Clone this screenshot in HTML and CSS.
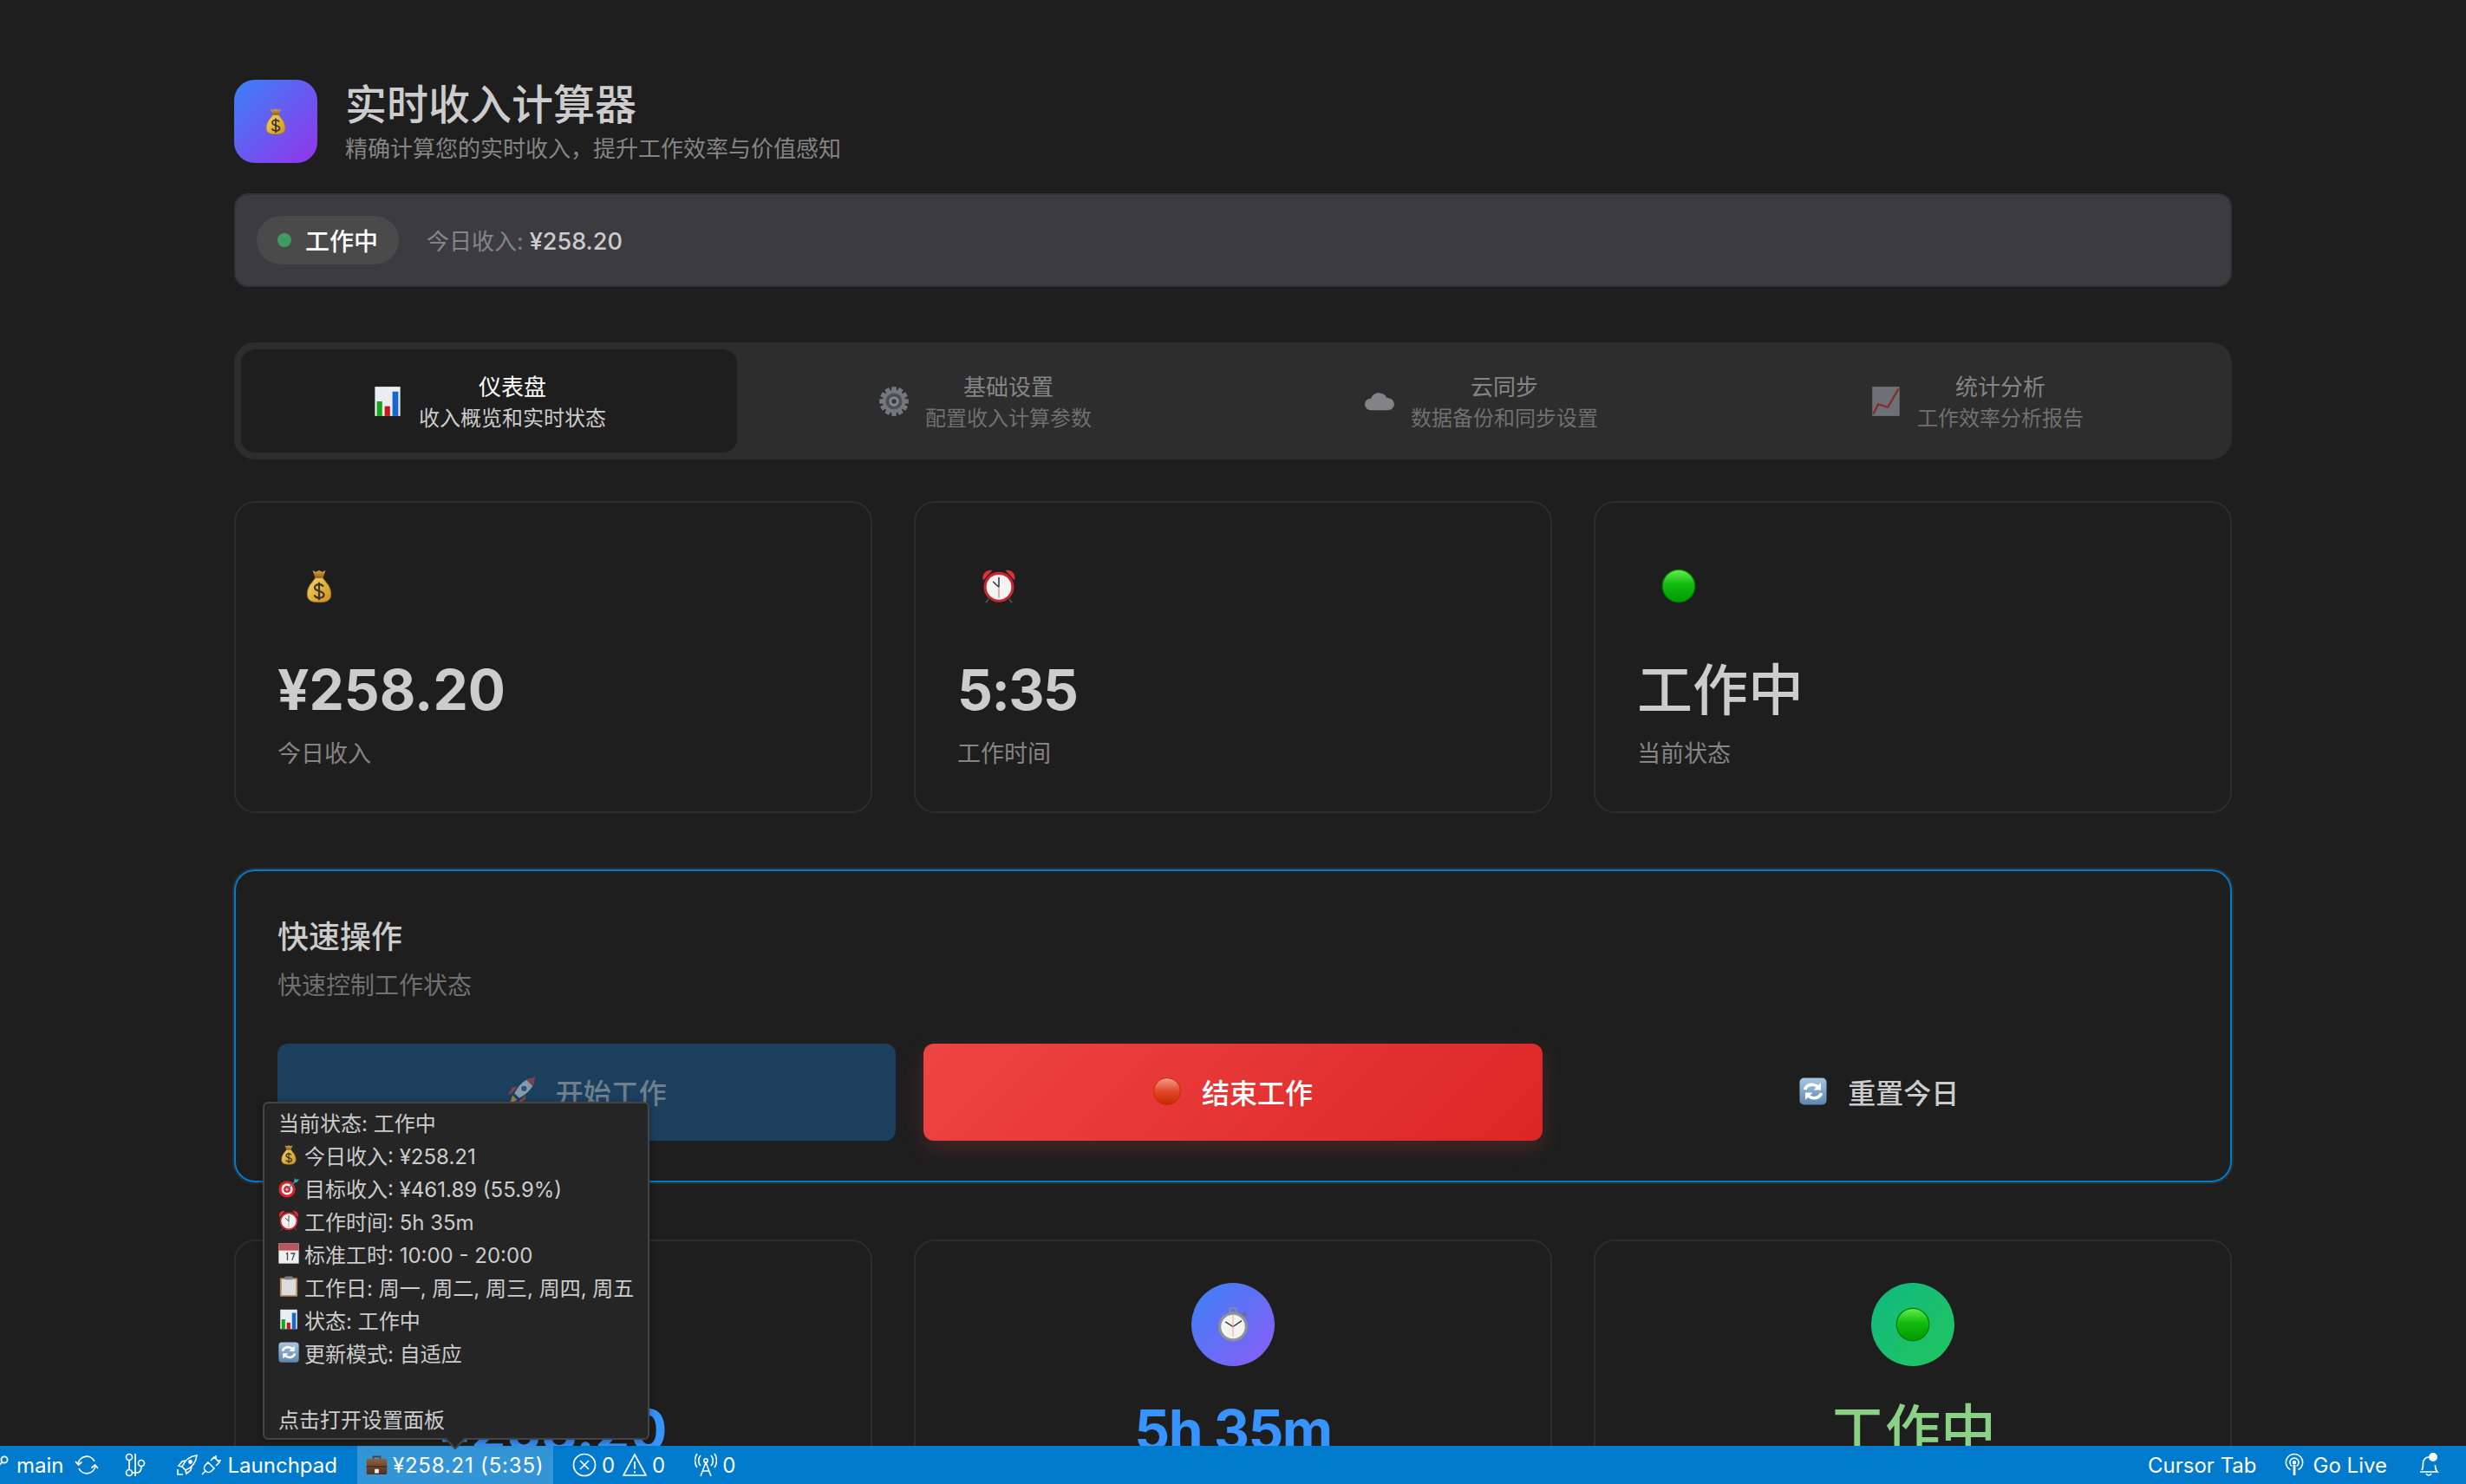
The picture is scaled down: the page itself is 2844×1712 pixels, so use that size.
FILE: index.html
```html
<!DOCTYPE html>
<html lang="zh-CN">
<head>
    <meta charset="utf-8">
    <title>实时收入计算器</title>
    <link rel="stylesheet" href="styles.css">
</head>
<body>
    <svg class="defs" width="0" height="0">
        <defs>
            <linearGradient id="g-bag" x1="0" y1="0" x2="1" y2="1"><stop offset="0" stop-color="#f6d765"/><stop offset="1" stop-color="#c98f22"/></linearGradient>
            <linearGradient id="g-neck" x1="0" y1="0" x2="0" y2="1"><stop offset="0" stop-color="#d9a648"/><stop offset="1" stop-color="#8a5a1c"/></linearGradient>
            <linearGradient id="g-green" x1="0" y1="0" x2="0" y2="1"><stop offset="0" stop-color="#62f04a"/><stop offset=".45" stop-color="#12bb10"/><stop offset="1" stop-color="#009a00"/></linearGradient>
            <linearGradient id="g-red" x1="0" y1="0" x2="0" y2="1"><stop offset="0" stop-color="#f3a08c"/><stop offset=".5" stop-color="#e0482a"/><stop offset="1" stop-color="#c92800"/></linearGradient>
            <linearGradient id="g-blue" x1="0" y1="0" x2="0" y2="1"><stop offset="0" stop-color="#a9c6e2"/><stop offset="1" stop-color="#5d86ae"/></linearGradient>
            <linearGradient id="g-case" x1="0" y1="0" x2="0" y2="1"><stop offset="0" stop-color="#8d5f3e"/><stop offset="1" stop-color="#4e3020"/></linearGradient>

            <symbol id="e-bag" viewBox="0 0 64 64">
                <path d="M20 3l6 3 6-3 6 3 6-3-5 15H25z" fill="url(#g-neck)"/>
                <path d="M25 17h14c2 5 15 14 15 30 0 11-7 15-22 15S10 58 10 47c0-16 13-25 15-30z" fill="url(#g-bag)" stroke="#a06f1c" stroke-width="1.5"/>
                <path d="M40 33c-2-3-5-4-8-4-4 0-8 2-8 6 0 8 17 5 17 13 0 4-4 6-9 6-4 0-7-2-9-5M32 25v33" fill="none" stroke="#3b3226" stroke-width="3.4"/>
            </symbol>
            <symbol id="e-chart" viewBox="0 0 64 64">
                <rect x="6" y="2" width="52" height="60" fill="#e8eef2"/>
                <rect x="10" y="32" width="11" height="30" fill="#17a51f"/>
                <rect x="26" y="42" width="11" height="20" fill="#c8171c"/>
                <rect x="42" y="12" width="12" height="50" fill="#1566cf"/>
            </symbol>
            <symbol id="e-gear" viewBox="0 0 64 64">
                <g fill="#868a90"><circle cx="32" cy="32" r="23"/>
                    <g id="teeth"><rect x="27" y="2" width="10" height="60" rx="2"/><rect x="27" y="2" width="10" height="60" rx="2" transform="rotate(30 32 32)"/><rect x="27" y="2" width="10" height="60" rx="2" transform="rotate(60 32 32)"/><rect x="27" y="2" width="10" height="60" rx="2" transform="rotate(90 32 32)"/><rect x="27" y="2" width="10" height="60" rx="2" transform="rotate(120 32 32)"/><rect x="27" y="2" width="10" height="60" rx="2" transform="rotate(150 32 32)"/></g>
                </g>
                <circle cx="32" cy="32" r="17" fill="#55595f"/>
                <circle cx="32" cy="32" r="10" fill="#9da1a6"/>
                <circle cx="32" cy="32" r="5" fill="#3b3e42"/>
            </symbol>
            <symbol id="e-cloud" viewBox="0 0 64 64">
                <path d="M15 50C7 50 2 44 2 38c0-7 6-12 12-11 3-8 10-13 18-12 7 0 12 4 15 10 9 0 15 6 15 13 0 7-6 12-14 12z" fill="#96999d"/>
            </symbol>
            <symbol id="e-trend" viewBox="0 0 64 64">
                <rect x="4" y="2" width="56" height="60" fill="#7e8388"/>
                <path d="M6 58l10-20 20 6L58 6" fill="none" stroke="#9c2a2e" stroke-width="4"/>
            </symbol>
            <symbol id="e-alarm" viewBox="0 0 64 64">
                <path d="M3 22C0 10 8 1 20 3zM61 22c3-12-5-21-17-19z" fill="#d8333d"/>
                <path d="M13 56l-5 7M51 56l5 7" stroke="#444" stroke-width="4"/>
                <circle cx="32" cy="34" r="28" fill="#c9272f"/>
                <circle cx="32" cy="34" r="23" fill="#f4f4f2"/>
                <path d="M32 34V16M32 34l-11-10" fill="none" stroke="#333" stroke-width="2.4"/>
                <path d="M32 34v20" stroke="#d8333d" stroke-width="1.2"/>
            </symbol>
            <symbol id="e-green" viewBox="0 0 64 64">
                <circle cx="32" cy="32" r="30" fill="url(#g-green)" stroke="#007d00" stroke-width="2"/>
            </symbol>
            <symbol id="e-red" viewBox="0 0 64 64">
                <circle cx="32" cy="32" r="31" fill="url(#g-red)" stroke="#c92800" stroke-width="2"/>
            </symbol>
            <symbol id="e-rocket" viewBox="3 3 58 58">
                <path d="M8 58l6-18 10 10z" fill="#e5a72b"/>
                <path d="M14 34L4 40l10-16 10-2zM30 50l-6 10 16-10 2-10z" fill="#d6453a"/>
                <path d="M60 4c-18 1-30 10-42 32l10 10c22-12 31-24 32-42z" fill="#c7d3de"/>
                <path d="M60 4c-6 0-12 2-17 4l13 13c2-5 4-11 4-17z" fill="#c7403c"/>
                <circle cx="38" cy="26" r="7" fill="#3c5e8e" stroke="#eef2f5" stroke-width="2"/>
            </symbol>
            <symbol id="e-refresh" viewBox="0 0 64 64">
                <rect x="1" y="1" width="62" height="62" rx="10" fill="url(#g-blue)"/>
                <path d="M13 28c3-10 15-15 26-9l6 4M51 36c-3 10-15 15-26 9l-6-4" fill="none" stroke="#fff" stroke-width="7"/>
                <path d="M50 12v17H33zM14 52V35h17z" fill="#fff"/>
            </symbol>
            <symbol id="e-watch" viewBox="0 0 64 64">
                <rect x="26" y="1" width="12" height="9" rx="4" fill="none" stroke="#8a8f96" stroke-width="3"/>
                <circle cx="53" cy="13" r="4" fill="#6b7078"/>
                <circle cx="32" cy="36" r="27" fill="#8f9398"/>
                <circle cx="32" cy="36" r="22" fill="#f3f3f1"/>
                <path d="M32 36L18 27M32 36l16-11" fill="none" stroke="#333" stroke-width="2.2"/>
                <path d="M32 14v40" stroke="#eba88c" stroke-width="1.6"/>
            </symbol>
            <symbol id="e-target" viewBox="1 2 62 62">
                <circle cx="27" cy="38" r="25" fill="#d8232e"/>
                <circle cx="27" cy="38" r="17" fill="#f4f1ee"/>
                <circle cx="27" cy="38" r="10" fill="#d8232e"/>
                <circle cx="27" cy="38" r="4" fill="#f4f1ee"/>
                <path d="M27 38L52 14" stroke="#4c7f8e" stroke-width="3.5"/>
                <path d="M48 14l2-10 4 5 9-1-6 9-7 2z" fill="#3fa6a8"/>
            </symbol>
            <symbol id="e-cal" viewBox="0 0 64 64">
                <rect x="1" y="1" width="62" height="62" fill="#eef0f2"/>
                <rect x="1" y="1" width="62" height="22" fill="#b9565c"/>
                <path d="M24 34l4-3v22M38 32h12l-8 21" fill="none" stroke="#44484d" stroke-width="3.5"/>
            </symbol>
            <symbol id="e-clip" viewBox="0 0 64 64">
                <rect x="5" y="6" width="54" height="57" rx="2" fill="#b9875a"/>
                <rect x="10" y="10" width="44" height="49" fill="#dcdcdc"/>
                <rect x="20" y="1" width="24" height="10" rx="2" fill="#7f8388"/>
            </symbol>
            <symbol id="e-case" viewBox="0 0 64 64">
                <path d="M22 14V6h20v8" fill="none" stroke="#5a3a26" stroke-width="4"/>
                <rect x="2" y="13" width="60" height="46" rx="4" fill="url(#g-case)"/>
                <rect x="2" y="34" width="60" height="3" fill="#3a2418"/>
                <rect x="26" y="43" width="12" height="12" fill="#eee"/>
            </symbol>

            <symbol id="i-branch" viewBox="0 0 24 24"><g fill="none" stroke="#fff" stroke-width="1.8"><circle cx="17" cy="6" r="3.6"/><path d="M14.5 9L6 17M3 21l5-5"/></g></symbol>
            <symbol id="i-sync" viewBox="0 0 28 28"><g fill="none" stroke="#fff" stroke-width="1.7"><path d="M4 13A10 10 0 0 1 23 10M24 15A10 10 0 0 1 5 18"/><path d="M1 10l3.500 4 4-3.500M27 18l-3.500-4-4 3.500"/></g></symbol>
            <symbol id="i-graph" viewBox="0 0 24 28"><g fill="none" stroke="#fff" stroke-width="1.7"><circle cx="5" cy="5" r="3.500"/><circle cx="5" cy="23" r="3.500"/><circle cx="19" cy="12" r="3.500"/><path d="M5 8.500v11M12 1v26M8.500 23H14c4 0 5-3 5-7.500"/></g></symbol>
            <symbol id="i-rocket" viewBox="0 0 24 24"><g fill="none" stroke="#fff" stroke-width="1.600"><path d="M23 1C14 2 9 7 6 14l4 4c7-3 12-8 13-17zM6 14l-4-1 4-5 4-1M10 18l1 4 5-4 1-4"/><circle cx="15.500" cy="8.500" r="1.600" fill="#fff"/><path d="M1 17v6h6"/></g></symbol>
            <symbol id="i-plug" viewBox="0 0 24 24"><g fill="none" stroke="#fff" stroke-width="1.600"><path d="M8 9l7 7-3 3c-2 2-5 2-7 0s-2-5 0-7zM1 23l4-4M11 7l4-4 6 6-4 4M17 1v5M23 7h-5"/></g></symbol>
            <symbol id="i-error" viewBox="0 0 28 28"><g fill="none" stroke="#fff" stroke-width="1.700"><circle cx="14" cy="14" r="12.500"/><path d="M9 9l10 10M19 9L9 19"/></g></symbol>
            <symbol id="i-warn" viewBox="0 0 28 28"><g fill="none" stroke="#fff" stroke-width="1.700"><path d="M14 2L27 26H1zM14 10v9M14 21v2.500"/></g></symbol>
            <symbol id="i-radio" viewBox="0 0 26 28"><g fill="none" stroke="#fff" stroke-width="1.600"><circle cx="13" cy="9" r="2.200"/><path d="M13 11L7 27M13 11l6 16M9 21h8M7 3a9 9 0 0 0 0 12M19 3a9 9 0 0 1 0 12M3 1a14 14 0 0 0 0 16M23 1a14 14 0 0 1 0 16"/></g></symbol>
            <symbol id="i-live" viewBox="0 0 24 28"><g fill="none" stroke="#fff" stroke-width="1.700"><path d="M7 20A10.500 10.500 0 1 1 17 20M9 15.500a5.500 5.500 0 1 1 6 0"/><circle cx="12" cy="11" r="1.600" fill="#fff"/><path d="M12 14v13" stroke-width="3"/></g></symbol>
            <symbol id="i-bell" viewBox="0 0 24 28"><path d="M4 20c1.500-2 1.500-5 1.500-8 0-4 3-7 6.500-7M2 22h20c-2-2-2.500-4-2.500-8M9 24c1 2.500 5 2.500 6 0" fill="none" stroke="#fff" stroke-width="1.700"/><circle cx="17" cy="5" r="5" fill="#fff"/></symbol>
        </defs>
    </svg>

    <div class="app">
        <div class="main">
            <div class="header">
                <div class="logo"><svg class="emoji e-logo"><use href="#e-bag"/></svg></div>
                <div class="header-text">
                    <div class="title">实时收入计算器</div>
                    <div class="subtitle">精确计算您的实时收入，提升工作效率与价值感知</div>
                </div>
            </div>

            <div class="status-strip">
                <div class="pill"><span class="dot"></span>工作中</div>
                <div class="today">今日收入: <b>¥258.20</b></div>
            </div>

            <div class="tabs">
                <div class="tab active">
                    <svg class="emoji e-tab"><use href="#e-chart"/></svg>
                    <div class="tab-text"><div class="tab-name">仪表盘</div><div class="tab-desc">收入概览和实时状态</div></div>
                </div>
                <div class="tab">
                    <svg class="emoji e-tab"><use href="#e-gear"/></svg>
                    <div class="tab-text"><div class="tab-name">基础设置</div><div class="tab-desc">配置收入计算参数</div></div>
                </div>
                <div class="tab">
                    <svg class="emoji e-tab"><use href="#e-cloud"/></svg>
                    <div class="tab-text"><div class="tab-name">云同步</div><div class="tab-desc">数据备份和同步设置</div></div>
                </div>
                <div class="tab">
                    <svg class="emoji e-tab"><use href="#e-trend"/></svg>
                    <div class="tab-text"><div class="tab-name">统计分析</div><div class="tab-desc">工作效率分析报告</div></div>
                </div>
            </div>

            <div class="grid stats">
                <div class="card">
                    <div class="card-icon"><svg class="emoji e-card"><use href="#e-bag"/></svg></div>
                    <div class="card-value">¥258.20</div>
                    <div class="card-label">今日收入</div>
                </div>
                <div class="card">
                    <div class="card-icon"><svg class="emoji e-card"><use href="#e-alarm"/></svg></div>
                    <div class="card-value tight">5:35</div>
                    <div class="card-label">工作时间</div>
                </div>
                <div class="card">
                    <div class="card-icon"><svg class="emoji e-card"><use href="#e-green"/></svg></div>
                    <div class="card-value cjk">工作中</div>
                    <div class="card-label">当前状态</div>
                </div>
            </div>

            <div class="panel">
                <div class="panel-title">快速操作</div>
                <div class="panel-desc">快速控制工作状态</div>
                <div class="actions">
                    <div class="btn btn-start"><svg class="emoji e-btn"><use href="#e-rocket"/></svg>开始工作</div>
                    <div class="btn btn-stop"><svg class="emoji e-btn"><use href="#e-red"/></svg>结束工作</div>
                    <div class="btn btn-reset"><svg class="emoji e-btn"><use href="#e-refresh"/></svg>重置今日</div>
                </div>
            </div>

            <div class="grid summary">
                <div class="card center">
                    <div class="round round-blue"><svg class="emoji e-round"><use href="#e-bag"/></svg></div>
                    <div class="card-value blue">¥258.20</div>
                </div>
                <div class="card center">
                    <div class="round round-blue"><svg class="emoji e-round"><use href="#e-watch"/></svg></div>
                    <div class="card-value blue tight">5h 35m</div>
                </div>
                <div class="card center">
                    <div class="round round-green"><svg class="emoji e-round"><use href="#e-green"/></svg></div>
                    <div class="card-value green cjk">工作中</div>
                </div>
            </div>
        </div>

        <div class="statusbar">
            <div class="sb-group">
                <svg class="sb-icon sb-clipped"><use href="#i-branch"/></svg>
                <span class="sb-main">main</span>
                <svg class="sb-icon sb-sync"><use href="#i-sync"/></svg>
                <svg class="sb-icon sb-graph"><use href="#i-graph"/></svg>
                <svg class="sb-icon sb-rocket"><use href="#i-rocket"/></svg>
                <svg class="sb-icon sb-plug"><use href="#i-plug"/></svg>
                <span class="sb-launch">Launchpad</span>
                <div class="sb-income"><svg class="emoji e-case"><use href="#e-case"/></svg>¥258.21 (5:35)</div>
                <svg class="sb-icon sb-error"><use href="#i-error"/></svg>
                <span class="sb-num">0</span>
                <svg class="sb-icon sb-warn"><use href="#i-warn"/></svg>
                <span class="sb-num">0</span>
                <svg class="sb-icon sb-radio"><use href="#i-radio"/></svg>
                <span class="sb-num">0</span>
            </div>
            <div class="sb-group">
                <span class="sb-cursor">Cursor Tab</span>
                <svg class="sb-icon sb-live"><use href="#i-live"/></svg>
                <span class="sb-golive">Go Live</span>
                <svg class="sb-icon sb-bell"><use href="#i-bell"/></svg>
            </div>
        </div>
    </div>

    <div class="tooltip">
        <div class="tip-line">当前状态: 工作中</div>
        <div class="tip-line"><svg class="emoji e-tip"><use href="#e-bag"/></svg>今日收入: ¥258.21</div>
        <div class="tip-line"><svg class="emoji e-tip"><use href="#e-target"/></svg>目标收入: ¥461.89 (55.9%)</div>
        <div class="tip-line"><svg class="emoji e-tip"><use href="#e-alarm"/></svg>工作时间: 5h 35m</div>
        <div class="tip-line"><svg class="emoji e-tip"><use href="#e-cal"/></svg>标准工时: 10:00 - 20:00</div>
        <div class="tip-line"><svg class="emoji e-tip"><use href="#e-clip"/></svg>工作日: 周一, 周二, 周三, 周四, 周五</div>
        <div class="tip-line"><svg class="emoji e-tip"><use href="#e-chart"/></svg>状态: 工作中</div>
        <div class="tip-line"><svg class="emoji e-tip"><use href="#e-refresh"/></svg>更新模式: 自适应</div>
        <div class="tip-line tip-gap">点击打开设置面板</div>
    </div>
</body>
</html>
```

FILE: styles.css
```css
html, body {
    height: 100%;
    margin: 0;
    padding: 0;
}
body {
    background: #1e1e1e;
    color: #cccccc;
    font-family: Inter, "Noto Sans CJK SC", sans-serif;
    overflow: hidden;
}
.defs {
    position: absolute;
}
.emoji {
    flex: none;
    display: block;
}
.app {
    height: 1712px;
    display: flex;
    flex-direction: column;
}
.main {
    flex: 1;
    min-height: 0;
    overflow: hidden;
    padding: 92px 270px 0;
}

/* header */
.header {
    display: flex;
    align-items: center;
    gap: 32px;
    height: 96px;
    margin-bottom: 35px;
}
.logo {
    width: 96px;
    height: 96px;
    border-radius: 24px;
    background: linear-gradient(135deg, #3b82f6, #9333ea);
    display: flex;
    align-items: center;
    justify-content: center;
}
.e-logo {
    width: 32px;
    height: 38px;
}
.title {
    font-size: 48px;
    font-weight: 500;
    line-height: 60px;
}
.subtitle {
    font-size: 26px;
    line-height: 36px;
    color: #858585;
    padding-top: 3px;
}

/* status strip */
.status-strip {
    height: 108px;
    box-sizing: border-box;
    background: #3c3c40;
    border: 2px solid #333336;
    border-radius: 16px;
    display: flex;
    align-items: center;
    gap: 32px;
    padding-left: 24px;
    margin-bottom: 64px;
}
.pill {
    height: 56px;
    width: 164px;
    border-radius: 28px;
    background: #4a4a4a;
    color: #ffffff;
    font-size: 28px;
    font-weight: 500;
    display: flex;
    align-items: center;
    gap: 16px;
    padding-left: 24px;
    box-sizing: border-box;
}
.dot {
    width: 16px;
    height: 16px;
    border-radius: 50%;
    background: #3f9b62;
}
.today {
    font-size: 26px;
    color: #858585;
    margin-top: -2px;
}
.today b {
    font-size: 27px;
    font-weight: 500;
    color: #cccccc;
}

/* tabs */
.tabs {
    height: 135px;
    box-sizing: border-box;
    padding: 8px;
    background: #2d2d2d;
    border-radius: 24px;
    display: grid;
    grid-template-columns: repeat(4, 1fr);
    margin-bottom: 48px;
}
.tab {
    display: flex;
    align-items: center;
    justify-content: center;
    gap: 18px;
    border-radius: 16px;
    color: #858585;
}
.tab .emoji {
    opacity: .8;
}
.tab.active {
    background: #1e1e1e;
    color: #ffffff;
}
.tab.active .emoji {
    opacity: 1;
}
.e-tab {
    width: 36px;
    height: 36px;
}
.tab-text {
    text-align: center;
    padding-top: 4px;
}
.tab-name {
    font-size: 26px;
    line-height: 36px;
}
.tab-desc {
    font-size: 24px;
    line-height: 36px;
    color: #707070;
}
.tab.active .tab-desc {
    color: #cccccc;
}

/* cards */
.grid {
    display: grid;
    grid-template-columns: repeat(3, 1fr);
    gap: 48px;
}
.stats {
    margin-bottom: 65px;
}
.summary {
    height: 400px;
}
.card {
    height: 360px;
    box-sizing: border-box;
    border: 2px solid #2d2d2d;
    border-radius: 24px;
    padding: 48px;
}
.card-icon {
    width: 96px;
    height: 96px;
    display: flex;
    align-items: center;
    justify-content: center;
}
.e-card {
    width: 40px;
    height: 40px;
}
.card-value {
    font-size: 64px;
    font-weight: 700;
    line-height: 80px;
    margin-top: 32px;
}
.card-value.tight {
    letter-spacing: -1.5px;
}
.card-value.cjk {
    font-weight: 500;
}
.card-label {
    font-size: 27px;
    line-height: 40px;
    color: #858585;
    margin-top: 14px;
}
.card.center {
    height: 400px;
    display: flex;
    flex-direction: column;
    align-items: center;
}
.card.center .card-value {
    margin-top: 34px;
}
.round {
    width: 96px;
    height: 96px;
    border-radius: 50%;
    display: flex;
    align-items: center;
    justify-content: center;
}
.round-blue {
    background: linear-gradient(135deg, #3b82f6, #8b5cf6);
}
.round-green {
    background: linear-gradient(135deg, #10b981, #22c55e);
}
.e-round {
    width: 40px;
    height: 40px;
}
.blue {
    color: #3794ff;
}
.green {
    color: #89d185;
}

/* quick actions */
.panel {
    height: 361px;
    box-sizing: border-box;
    border: 2px solid #007acc;
    box-shadow: 0 0 0 2px #2d2d2d;
    border-radius: 24px;
    padding: 51px 48px 0;
    margin-bottom: 66px;
}
.panel-title {
    font-size: 36px;
    font-weight: 500;
    line-height: 50px;
}
.panel-desc {
    font-size: 28px;
    line-height: 40px;
    color: #707070;
    margin-top: 11px;
}
.actions {
    display: grid;
    grid-template-columns: repeat(3, 1fr);
    gap: 32px;
    margin-top: 47px;
}
.btn {
    height: 112px;
    box-sizing: border-box;
    padding-bottom: 3px;
    border-radius: 12px;
    display: flex;
    align-items: center;
    justify-content: center;
    gap: 24px;
    font-size: 32px;
    font-weight: 500;
}
.e-btn {
    width: 32px;
    height: 32px;
}
.btn-start {
    background: #1d3f5e;
    color: #6f7f8c;
}
.btn-start .emoji {
    opacity: .6;
}
.btn-stop {
    background: linear-gradient(135deg, #ef4444, #dc2626);
    color: #ffffff;
    box-shadow: 0 8px 24px rgba(239, 68, 68, .2);
}
.btn-reset {
    color: #cccccc;
}

/* bottom bar */
.statusbar {
    height: 44px;
    flex: none;
    background: #007acc;
    color: #ffffff;
    font-size: 24px;
    display: flex;
    justify-content: space-between;
    align-items: stretch;
    position: relative;
    z-index: 2;
}
.sb-group {
    display: flex;
    align-items: center;
}
.sb-icon {
    flex: none;
    width: 28px;
    height: 28px;
}
.sb-clipped {
    width: 24px;
    height: 24px;
    margin-left: -12px;
}
.sb-main {
    margin-left: 7px;
}
.sb-sync {
    margin-left: 12px;
}
.sb-graph {
    width: 24px;
    margin-left: 30px;
}
.sb-rocket {
    width: 24px;
    height: 24px;
    margin-left: 36px;
}
.sb-plug {
    width: 24px;
    height: 24px;
    margin-left: 4px;
}
.sb-launch {
    margin-left: 7px;
}
.sb-income {
    height: 44px;
    width: 226px;
    box-sizing: border-box;
    padding-left: 10px;
    margin-left: 23px;
    background: rgba(255, 255, 255, .2);
    display: flex;
    align-items: center;
    gap: 6px;
    letter-spacing: .8px;
}
.e-case {
    width: 25px;
    height: 25px;
}
.sb-error {
    margin-left: 22px;
}
.sb-warn {
    margin-left: 9px;
}
.sb-radio {
    width: 26px;
    margin-left: 34px;
}
.sb-num {
    margin-left: 6px;
}
.sb-live {
    width: 22px;
    margin-left: 32px;
}
.sb-golive {
    margin-left: 11px;
}
.sb-bell {
    width: 24px;
    margin: 0 31px 0 36px;
}

/* hover tooltip */
.tooltip {
    position: absolute;
    left: 303px;
    top: 1271px;
    width: 446px;
    height: 390px;
    box-sizing: border-box;
    padding: 2px 16px 0;
    background: #252526;
    border: 2px solid #454545;
    border-radius: 6px;
    font-size: 24px;
    color: #cccccc;
    z-index: 3;
    box-shadow: 0 2px 8px rgba(0, 0, 0, .36);
}
.tooltip::after {
    content: "";
    position: absolute;
    left: 212px;
    bottom: -10px;
    width: 14px;
    height: 14px;
    background: #252526;
    border-right: 2px solid #454545;
    border-bottom: 2px solid #454545;
    transform: rotate(45deg);
}
.tip-line {
    display: flex;
    align-items: center;
    height: 38px;
    white-space: nowrap;
    gap: 6px;
}
.tip-gap {
    margin-top: 38px;
}
.e-tip {
    width: 24px;
    height: 24px;
}
```
